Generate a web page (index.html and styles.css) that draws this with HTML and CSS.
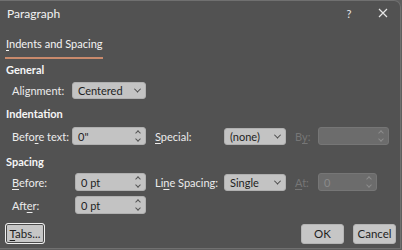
FILE: index.html
```html
<!DOCTYPE html>
<html lang="en">
<head>
    <meta charset="UTF-8">
    <title>Paragraph</title>
    <link rel="stylesheet" href="styles.css">
</head>
<body>
    <div class="dialog">
        <div class="titlebar">
            <span class="title">Paragraph</span>
            <span class="title-btn help">?</span>
            <span class="title-btn close">
                <svg width="10" height="10" viewBox="0 0 10 10"><path d="M1 1 L9 9 M9 1 L1 9" stroke="#e6e6e6" stroke-width="1.2" fill="none"/></svg>
            </span>
        </div>

        <div class="tabs">
            <div class="tab"><u>I</u>ndents and Spacing</div>
        </div>

        <div class="content">
            <div class="heading general">General</div>
            <div class="row row-align">
                <span class="label">Alignment:</span>
                <div class="select w74"><span>Centered</span><span class="chev"></span></div>
            </div>

            <div class="heading indent">Indentation</div>
            <div class="row row-indent">
                <span class="label">Befo<u>r</u>e text:</span>
                <div class="spin w74"><span>0"</span><span class="arrows"></span></div>
                <span class="label2"><u>S</u>pecial:</span>
                <div class="select w62"><span>(none)</span><span class="chev"></span></div>
                <span class="label3 dim">B<u>y</u>:</span>
                <div class="spin disabled w71"><span></span><span class="arrows"></span></div>
            </div>

            <div class="heading spacing">Spacing</div>
            <div class="row row-before">
                <span class="label wide"><u>B</u>efore:</span>
                <div class="spin w71"><span>0 pt</span><span class="arrows"></span></div>
                <span class="label2">Li<u>n</u>e Spacing:</span>
                <div class="select w62"><span>Single</span><span class="chev"></span></div>
                <span class="label3 dim"><u>A</u>t:</span>
                <div class="spin disabled w59"><span>0</span><span class="arrows"></span></div>
            </div>
            <div class="row row-after">
                <span class="label wide">Aft<u>e</u>r:</span>
                <div class="spin w71"><span>0 pt</span><span class="arrows"></span></div>
            </div>
        </div>

        <div class="footer">
            <button class="btn tabs-btn"><u>T</u>abs...</button>
            <div class="spacer"></div>
            <button class="btn ok">OK</button>
            <button class="btn cancel">Cancel</button>
        </div>
    </div>
</body>
</html>
```

FILE: styles.css
```css
* {
    margin: 0;
    padding: 0;
    box-sizing: border-box;
}

body {
    background-color: #5e5e5e;
    font-family: 'Lato', 'Open Sans', sans-serif;
    font-size: 11px;
    color: #f0f0f0;
    width: 402px;
    height: 250px;
    overflow: hidden;
}

.dialog {
    width: 401px;
    height: 249px;
    background-color: #525252;
    border: 1px solid #707070;
    border-left: none;
    border-top-right-radius: 7px;
    display: flex;
    flex-direction: column;
}

u {
    text-decoration-thickness: 1px;
    text-underline-offset: 2px;
}

.titlebar {
    height: 24px;
    display: flex;
    align-items: center;
    padding-left: 7px;
}

.title {
    font-size: 12px;
    color: #f2f2f2;
    flex: 1;
}

.title-btn {
    display: flex;
    justify-content: center;
    align-items: center;
    color: #e6e6e6;
}

.help {
    font-size: 11px;
    width: 10px;
    margin-right: 24px;
}

.close {
    width: 10px;
    margin-right: 12px;
}

.tabs {
    padding-left: 5px;
}

.tab {
    display: inline-block;
    white-space: nowrap;
    font-size: 11px;
    width: 98px;
    padding-top: 9px;
    line-height: 20px;
    padding-bottom: 3px;
    border-bottom: 2px solid #c98a6c;
    padding-left: 1px;
    color: #f4f4f4;
}

.content {
    padding-left: 6px;
}

.heading {
    font-weight: bold;
    font-size: 11px;
    line-height: 16px;
    color: #f6f6f6;
}

.general { margin-top: 3px; }
.indent { margin-top: 7px; }
.spacing { margin-top: 9px; }

.row {
    display: flex;
    align-items: center;
    padding-left: 6px;
    white-space: nowrap;
}

.row-align { margin-top: 4px; }
.row-indent { margin-top: 5px; }
.row-before { margin-top: 3px; }
.row-after { margin-top: 5px; }

.label {
    width: 60px;
    color: #ececec;
}

.label.wide {
    width: 63px;
}

.label2 {
    margin-left: 9px;
    width: 69px;
    color: #ececec;
}

.label3 {
    margin-left: 9px;
    width: 23px;
}

.dim {
    color: #767676;
}

.select, .spin {
    height: 18px;
    border-radius: 3px;
    background-color: #c3c3c3;
    border: 1px solid #b0b0b0;
    color: #1e1e1e;
    display: flex;
    align-items: center;
    justify-content: space-between;
    padding-left: 5px;
    padding-right: 5px;
}

.select {
    height: 17px;
}

.spin.disabled {
    background-color: #6c6c6c;
    border-color: #767676;
    color: #8a8a8a;
}

.w74 { width: 74px; }
.w71 { width: 71px; }
.w62 { width: 62px; }
.w59 { width: 59px; }

.chev {
    width: 5px;
    height: 5px;
    border-right: 1px solid #444;
    border-bottom: 1px solid #444;
    transform: rotate(45deg) translate(-1px, -1px);
}

.arrows {
    width: 5px;
    height: 14px;
    position: relative;
}

.arrows::before, .arrows::after {
    content: "";
    position: absolute;
    left: 1px;
    width: 3px;
    height: 3px;
    border-left: 1px solid #555;
    border-top: 1px solid #555;
}

.arrows::before {
    top: 2px;
    transform: rotate(45deg);
}

.arrows::after {
    bottom: 2px;
    transform: rotate(225deg);
}

.spin.disabled .arrows::before, .spin.disabled .arrows::after {
    border-color: #8c8c8c;
}

.footer {
    display: flex;
    align-items: center;
    margin-top: auto;
    padding: 0 4px 4px 5px;
}

.spacer {
    flex: 1;
}

.btn {
    font-family: 'Lato', 'Open Sans', sans-serif;
    font-size: 11.5px;
    height: 20px;
    background-color: #c6c6c6;
    border: 1px solid #b4b4b4;
    border-radius: 3px;
    color: #1e1e1e;
}

.tabs-btn {
    width: 40px;
    height: 21px;
    border: 1px solid #eeeeee;
    box-shadow: inset 0 0 0 1px #4a4a4a;
}

.ok {
    width: 43px;
}

.cancel {
    width: 43px;
    margin-left: 9px;
}
```
